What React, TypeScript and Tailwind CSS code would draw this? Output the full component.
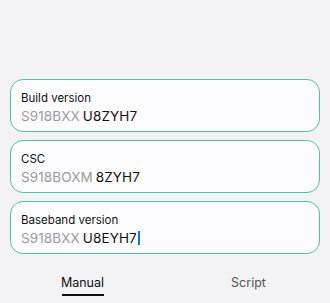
import React from "react"

type Field = { label: string; prefix: string; suffix: string; focused?: boolean }

const FIELDS: Field[] = [
  { label: "Build version", prefix: "S918BXX", suffix: "U8ZYH7" },
  { label: "CSC", prefix: "S918BOXM", suffix: "8ZYH7" },
  { label: "Baseband version", prefix: "S918BXX", suffix: "U8EYH7", focused: true },
]

function VersionField({ field }: { field: Field }) {
  return (
    <div className="h-[53px] rounded-[13px] border-[1.5px] border-[#55c19c] bg-[#fcfcfe] px-[10px] pt-[11px]">
      <div className="text-[11.5px] leading-[14px] text-[#111]">{field.label}</div>
      <div className="mt-[2px] flex items-center text-[13.5px] leading-[18px] tracking-[0.1px]">
        <span className="text-[#9b9b9b]">{field.prefix}</span>
        <span className="ml-[3px] text-[#111]">{field.suffix}</span>
        {field.focused && <span className="ml-[1px] h-[14px] w-[2px] bg-[#1a73d9]" />}
      </div>
    </div>
  )
}

export default function App() {
  return (
    <div
      className="flex h-[303px] w-[330px] flex-col bg-[#f3f2f4] px-[10px] pt-[79px]"
      style={{ fontFamily: "Inter, 'Noto Sans', sans-serif" }}
    >
      <div className="flex flex-col gap-[8px]">
        {FIELDS.map((f) => (
          <VersionField key={f.label} field={f} />
        ))}
      </div>
      <div className="mt-[21px] flex flex-row text-[12.5px] leading-[15px]">
        <div className="flex w-[145px] flex-col items-center">
          <span className="text-[#111]">Manual</span>
          <span className="mt-[4px] h-[2px] w-[42px] bg-[#111]" />
        </div>
        <div className="flex flex-1 flex-col items-center pl-[22px]">
          <span className="text-[#555]">Script</span>
        </div>
      </div>
    </div>
  )
}
